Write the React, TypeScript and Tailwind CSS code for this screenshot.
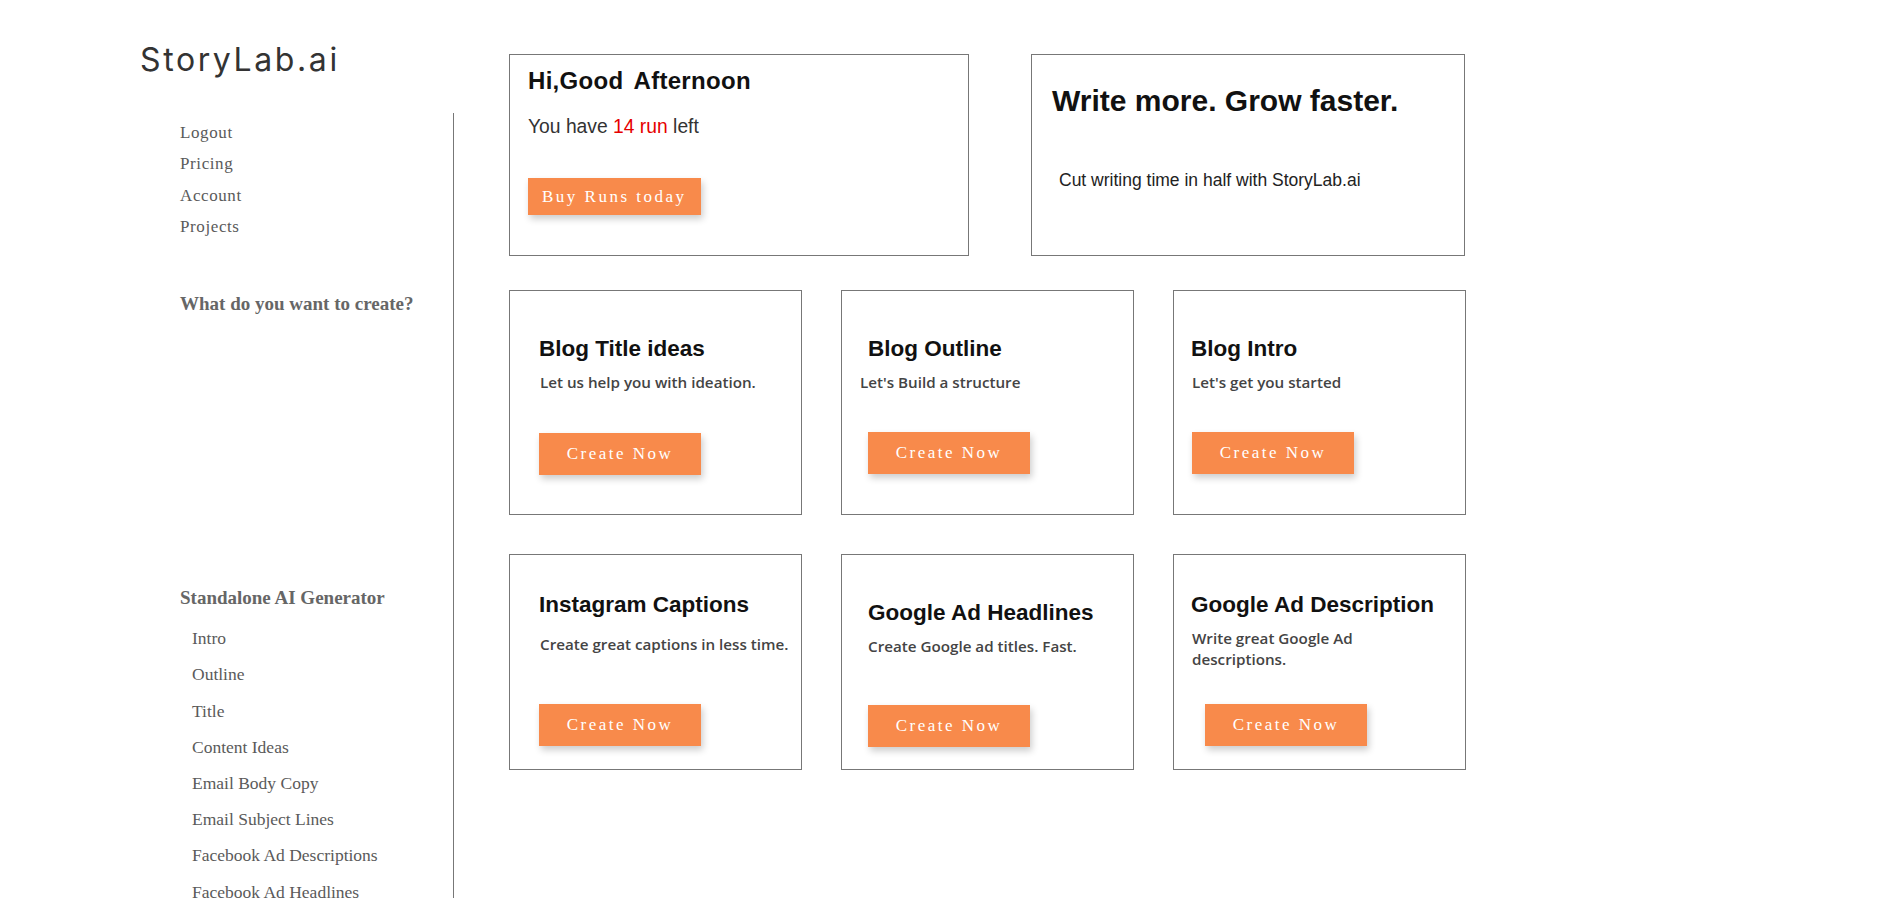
import React from "react"

const topLinks = ["Logout", "Pricing", "Account", "Projects"]

const generators = [
  "Intro",
  "Outline",
  "Title",
  "Content Ideas",
  "Email Body Copy",
  "Email Subject Lines",
  "Facebook Ad Descriptions",
  "Facebook Ad Headlines",
  "Google Ad Descriptions",
  "Google Ad Headlines",
]

const tools = [
  {
    title: "Blog Title ideas",
    text: "Let us help you with ideation.",
    titleCls: "pt-[45px] pl-[29px]",
    textCls: "mt-[10px] pl-[30px]",
    btnCls: "mt-[40px] ml-[29px]",
  },
  {
    title: "Blog Outline",
    text: "Let's Build a structure",
    titleCls: "pt-[45px] pl-[26px]",
    textCls: "mt-[10px] pl-[18px]",
    btnCls: "mt-[39px] ml-[26px]",
  },
  {
    title: "Blog Intro",
    text: "Let's get you started",
    titleCls: "pt-[45px] pl-[17px]",
    textCls: "mt-[10px] pl-[18px]",
    btnCls: "mt-[39px] ml-[18px]",
  },
  {
    title: "Instagram Captions",
    text: "Create great captions in less time.",
    titleCls: "pt-[37px] pl-[29px]",
    textCls: "mt-[16px] pl-[30px]",
    btnCls: "mt-[49px] ml-[29px]",
  },
  {
    title: "Google Ad Headlines",
    text: "Create Google ad titles. Fast.",
    titleCls: "pt-[45px] pl-[26px]",
    textCls: "mt-[10px] pl-[26px]",
    btnCls: "mt-[48px] ml-[26px]",
  },
  {
    title: "Google Ad Description",
    text: "Write great Google Ad descriptions.",
    titleCls: "pt-[37px] pl-[17px]",
    textCls: "mt-[10px] pl-[18px] w-[210px]",
    btnCls: "mt-[34px] ml-[31px]",
  },
]

function OrangeButton({ label, className }: { label: string; className: string }) {
  return (
    <button
      className={`block bg-[#f88a4b] text-white font-['Liberation_Serif',serif] text-[17px] tracking-[2.5px] shadow-[2px_4px_7px_rgba(0,0,0,0.2)] ${className}`}
    >
      {label}
    </button>
  )
}

function Sidebar() {
  return (
    <aside className="w-[454px] shrink-0 flex flex-col h-full">
      {/* Logo */}
      <div className="pt-[40px] pl-[140px] font-['Inter',sans-serif] text-[32px] leading-[40px] tracking-[2.6px] text-[#333]">
        StoryLab.ai
      </div>

      <nav className="mt-[33px] flex-1 min-h-0 overflow-hidden border-r border-[#777] pl-[180px] pt-[4px] font-['Liberation_Serif',serif]">
        <ul>
          {topLinks.map((l) => (
            <li key={l} className="text-[17px] leading-[31.3px] tracking-[0.6px] text-[#5a5a5a]">
              {l}
            </li>
          ))}
        </ul>

        <p className="mt-[50px] text-[19px] leading-[24px] font-bold text-[#666]">What do you want to create?</p>

        <p className="mt-[270px] text-[19px] leading-[24px] font-bold text-[#666]">Standalone AI Generator</p>
        <ul className="mt-[10px] pl-[12px]">
          {generators.map((g) => (
            <li key={g} className="text-[17.5px] leading-[36.2px] text-[#5a5a5a]">
              {g}
            </li>
          ))}
        </ul>
      </nav>
    </aside>
  )
}

export default function App() {
  return (
    <div className="flex h-screen overflow-hidden bg-white">
      <Sidebar />

      <main className="pl-[55px] pt-[54px] font-['Liberation_Sans',Arial,sans-serif]">
        {/* Top row */}
        <div className="flex">
          <div className="w-[460px] h-[202px] border border-[#777] pt-[12px] pl-[18px]">
            <h1 className="text-[24px] leading-[28px] font-bold tracking-[0.3px] [word-spacing:4px] text-[#111]">
              Hi,Good Afternoon
            </h1>
            <p className="mt-[20px] text-[19.3px] leading-[24px] text-[#333]">
              You have <span className="text-[#e60000]">14 run</span> left
            </p>
            <OrangeButton label="Buy Runs today" className="mt-[39px] h-[37px] px-[14px] leading-[37px]" />
          </div>

          <div className="ml-[62px] w-[434px] h-[202px] border border-[#777] pt-[28px]">
            <h2 className="pl-[20px] text-[30px] leading-[36px] font-bold text-[#111]">Write more. Grow faster.</h2>
            <p className="mt-[50px] pl-[27px] text-[17.5px] leading-[22px] text-[#222]">
              Cut writing time in half with StoryLab.ai
            </p>
          </div>
        </div>

        {/* Tool cards */}
        <div className="mt-[34px] grid grid-cols-[293px_293px_293px] grid-rows-[225px_216px] gap-x-[39px] gap-y-[39px]">
          {tools.map((t) => (
            <div key={t.title} className="border border-[#777]">
              <h3 className={`text-[22.5px] leading-[26px] font-bold text-[#111] ${t.titleCls}`}>{t.title}</h3>
              <p
                className={`font-['Open_Sans',sans-serif] text-[15.2px] leading-[21px] font-semibold text-[#444] ${t.textCls}`}
              >
                {t.text}
              </p>
              <OrangeButton label="Create Now" className={`w-[162px] h-[42px] leading-[42px] text-center ${t.btnCls}`} />
            </div>
          ))}
        </div>
      </main>
    </div>
  )
}
